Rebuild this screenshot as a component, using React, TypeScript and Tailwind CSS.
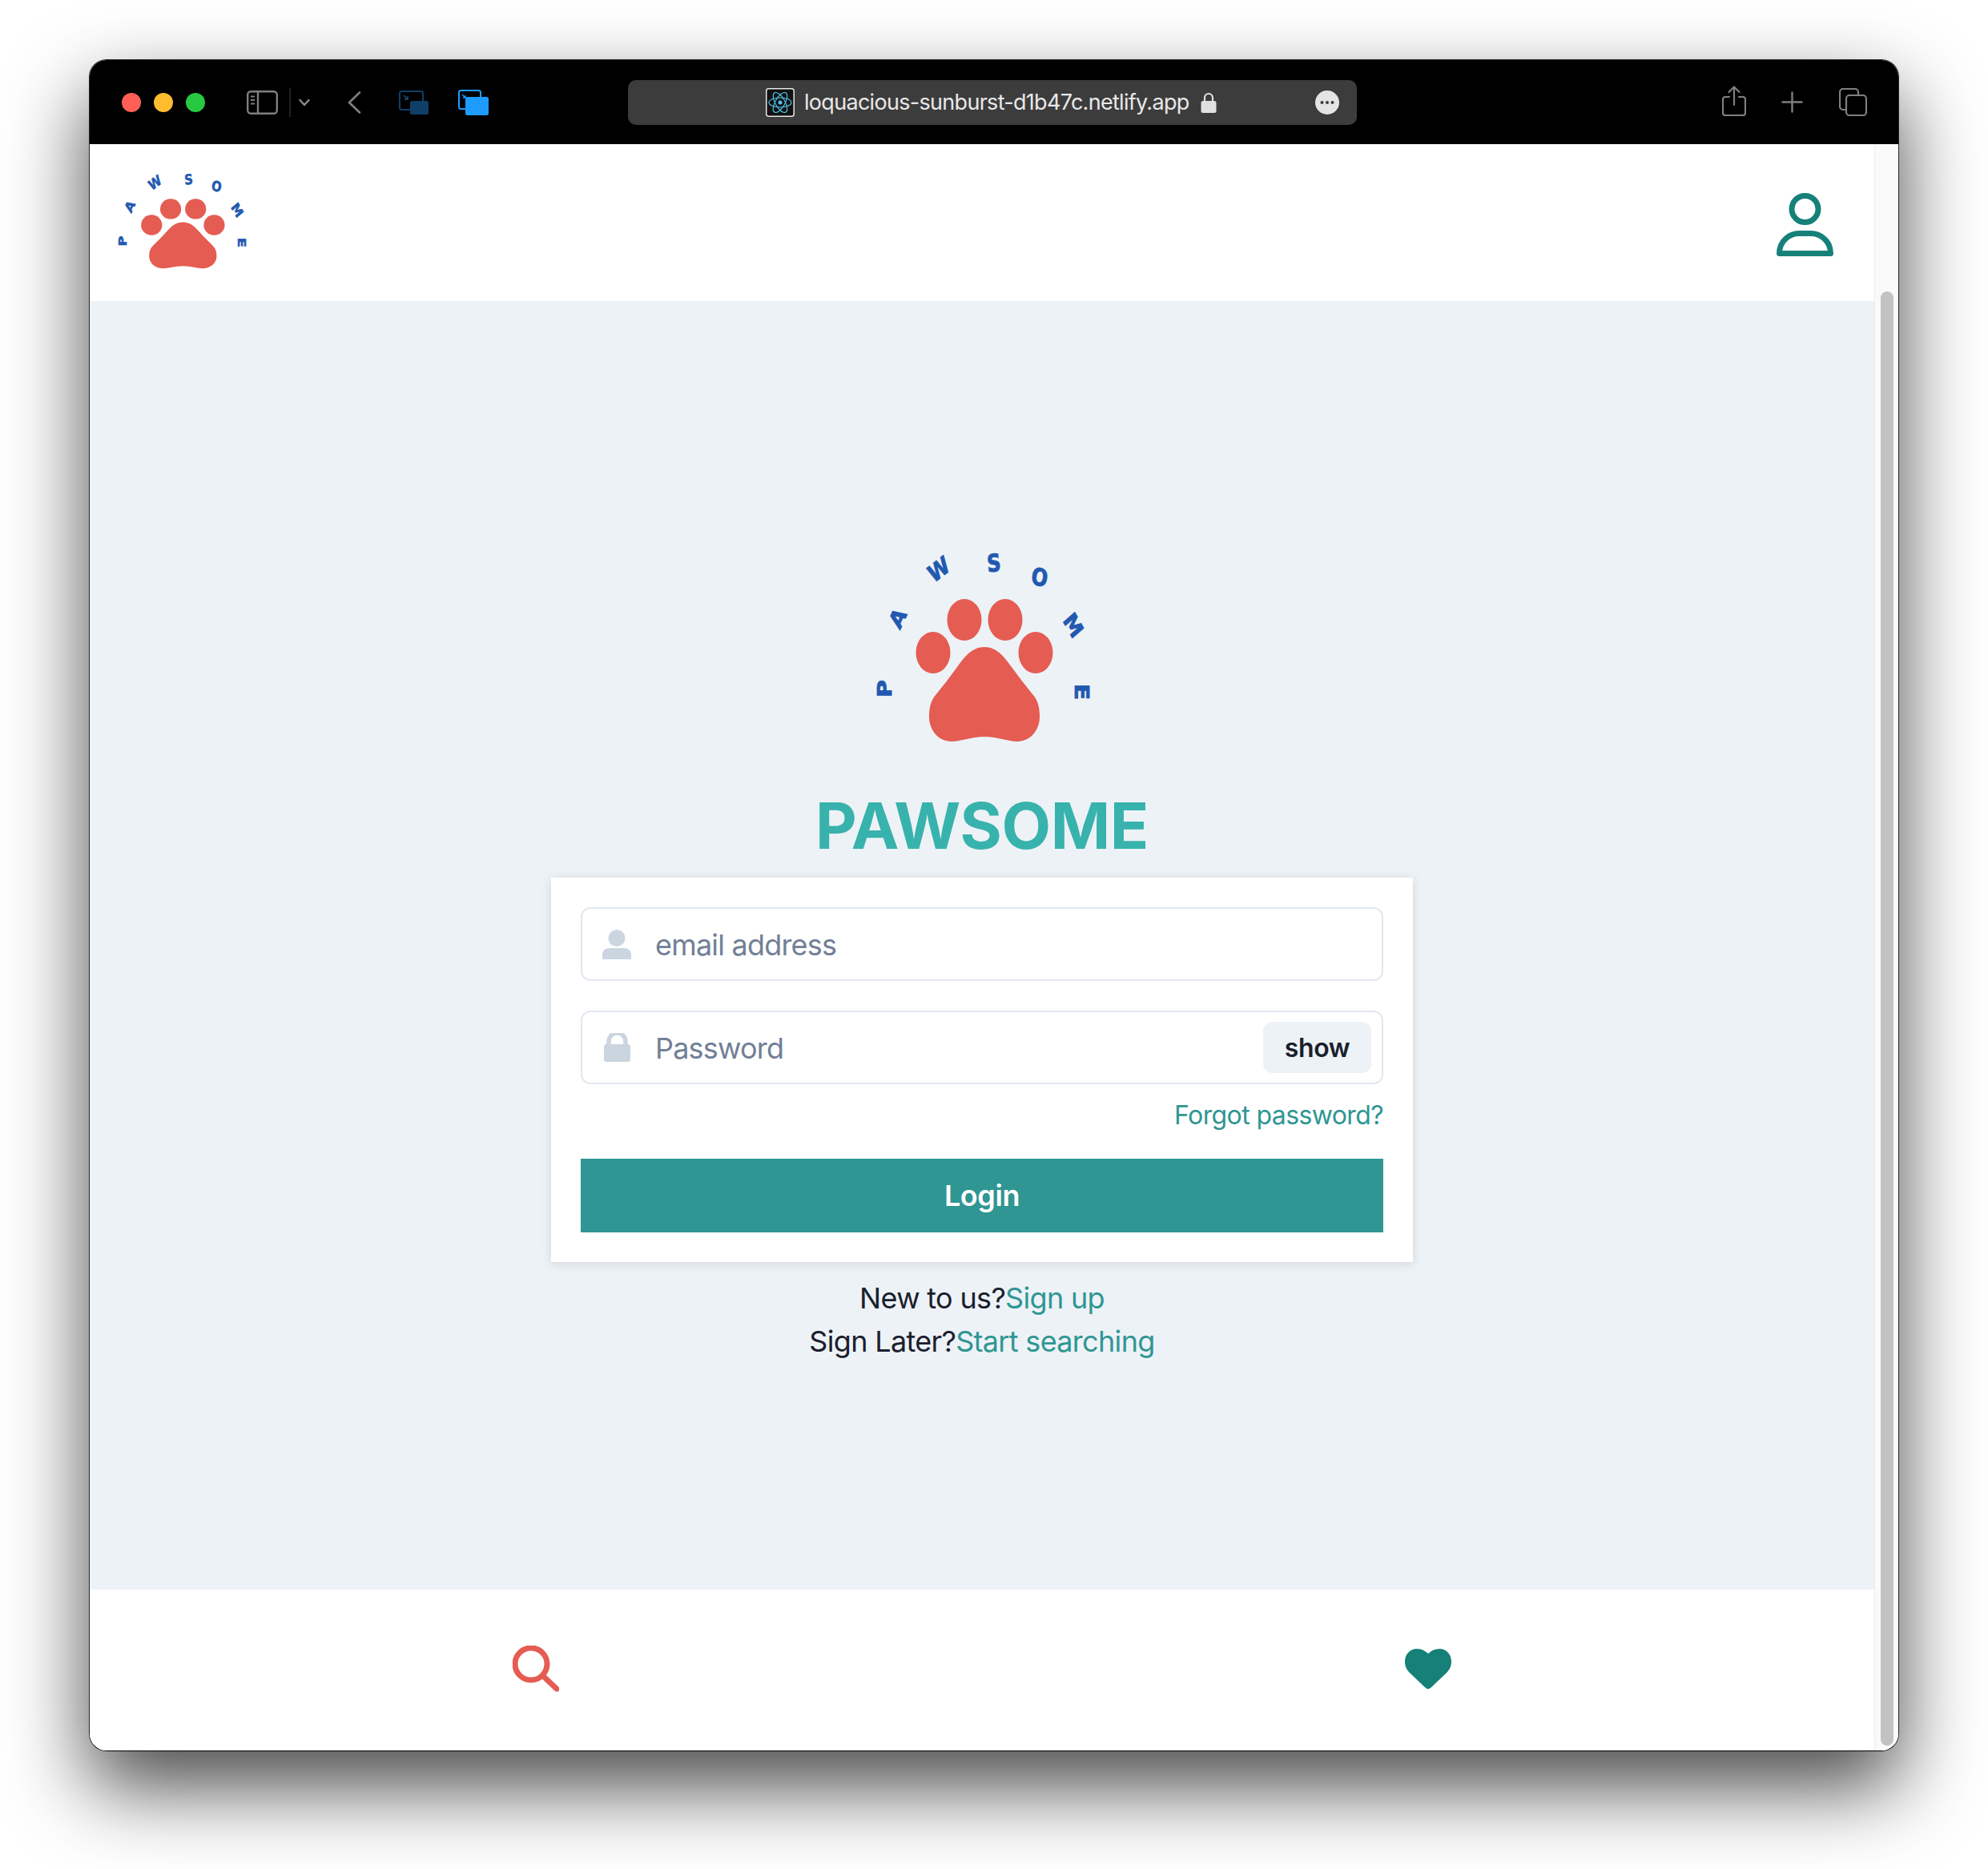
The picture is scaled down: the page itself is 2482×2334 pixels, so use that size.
import React from "react";

function PawLogo({ className, small }: { className: string; small?: boolean }) {
  const letters: [string, number, number, number][] = [
    ["P", 19, 180, -90],
    ["A", 35, 92, -60],
    ["W", 86, 31, -32],
    ["S", 155, 23, -5],
    ["O", 212, 41, 12],
    ["M", 254, 101, 55],
    ["E", 264, 184, 90],
  ];
  const shift = small ? -4 : 0;
  const yScale = small ? 1.5 : 1.25;
  return (
    <svg viewBox="0 0 280 260" preserveAspectRatio="none" className={`overflow-visible ${className}`}>
      <ellipse cx="79" cy="135" rx="21.5" ry="26" fill="#e55c52" />
      <ellipse cx="118" cy="94" rx="21.5" ry="26" fill="#e55c52" />
      <ellipse cx="169" cy="94" rx="21.5" ry="26" fill="#e55c52" />
      <ellipse cx="207" cy="135" rx="21.5" ry="26" fill="#e55c52" />
      <path
        fill="#e55c52"
        d="M143 128C158 128 167 139 177 153C187 167 195 177 204 188C210 195 212 204 212 215C212 232 200 246 184 246C172 246 160 240 143 240C126 240 114 246 102 246C86 246 74 232 74 215C74 204 76 195 82 188C91 177 99 167 109 153C119 139 128 128 143 128Z"
      />
      {letters.map(([c, x, y, r]) => (
        <text
          key={c}
          textAnchor="middle"
          dominantBaseline="central"
          fontFamily="'DejaVu Sans', sans-serif"
          fontWeight="700"
          fontSize="24"
          fill="#2259b0"
          stroke="#2259b0"
          strokeWidth="0.8"
          transform={`translate(${x} ${y + shift}) scale(1 ${yScale}) rotate(${r})`}
        >
          {c}
        </text>
      ))}
    </svg>
  );
}

function TitleBar() {
  return (
    <div className="flex h-[105px] shrink-0 items-center bg-black">
      <div className="ml-[40px] flex gap-4">
        <div className="h-6 w-6 rounded-full bg-[#ff5f57]" />
        <div className="h-6 w-6 rounded-full bg-[#febc2e]" />
        <div className="h-6 w-6 rounded-full bg-[#28c840]" />
      </div>
      <svg viewBox="0 0 39 30" className="ml-[52px] h-[30px] w-[39px]" fill="none" stroke="#7f7f7f" strokeWidth="2.4">
        <rect x="1.2" y="1.2" width="36.6" height="27.6" rx="4" />
        <path d="M14 1.2V28.8" />
        <path d="M5 7.5H10M5 12H10M5 16.5H10" strokeWidth="1.8" />
      </svg>
      <div className="ml-[14px] h-9 w-0.5 bg-[#222222]" />
      <svg viewBox="0 0 14 10" className="ml-[10px] h-[10px] w-[14px]" fill="none" stroke="#8c8c8c" strokeWidth="2.4" strokeLinecap="round" strokeLinejoin="round">
        <path d="M1.5 2L7 8L12.5 2" />
      </svg>
      <svg viewBox="0 0 17 28" className="ml-[47px] h-7 w-[17px]" fill="none" stroke="#7f7f7f" strokeWidth="2.6" strokeLinecap="round" strokeLinejoin="round">
        <path d="M15 1.5L2 14L15 26.5" />
      </svg>
      <svg viewBox="0 0 37 30" className="ml-[47px] h-[30px] w-[37px]">
        <rect x="1" y="1" width="29" height="23" rx="2.5" fill="none" stroke="#0f3f66" strokeWidth="2" />
        <rect x="14" y="13" width="23" height="17" rx="2.5" fill="#0f3f66" />
        <path d="M6 6L11 11M11 7V11H7" fill="none" stroke="#0f4f80" strokeWidth="1.5" />
      </svg>
      <svg viewBox="0 0 38 32" className="ml-[37px] h-8 w-[38px]">
        <rect x="1" y="1" width="27" height="23" rx="2.5" fill="none" stroke="#1e9bff" strokeWidth="2" />
        <rect x="9" y="9" width="29" height="23" rx="2.5" fill="#1e9bff" />
        <path d="M5 6L9 10M9 7V10H6" fill="none" stroke="#1e9bff" strokeWidth="1.3" />
      </svg>
      <div className="ml-[174px] flex h-14 w-[910px] items-center rounded-[10px] bg-[#3c3c3c] pl-[172px] pr-[22px]">
        <svg viewBox="0 0 36 36" className="h-9 w-9 shrink-0">
          <rect x="0.75" y="0.75" width="34.5" height="34.5" rx="3" fill="#111" stroke="#e8e8e8" strokeWidth="1.5" />
          <g fill="none" stroke="#4fc3e8" strokeWidth="1.2">
            <ellipse cx="18" cy="18" rx="14" ry="6" />
            <ellipse cx="18" cy="18" rx="14" ry="6" transform="rotate(60 18 18)" />
            <ellipse cx="18" cy="18" rx="14" ry="6" transform="rotate(120 18 18)" />
          </g>
          <circle cx="18" cy="18" r="2.5" fill="#4fc3e8" />
        </svg>
        <span className="ml-[12px] whitespace-nowrap font-['Inter',sans-serif] text-[27px] leading-9 tracking-[-0.7px] text-[#e8e8e8]">
          loquacious-sunburst-d1b47c.netlify.app
        </span>
        <svg viewBox="0 0 20 26" className="ml-[14px] h-[26px] w-5 shrink-0">
          <path d="M5 12V7a5 5 0 0 1 10 0v5" fill="none" stroke="#e0e0e0" strokeWidth="2.2" />
          <rect x="0.5" y="11" width="19" height="15" rx="2.5" fill="#e0e0e0" />
        </svg>
        <svg viewBox="0 0 30 30" className="ml-auto h-[30px] w-[30px] shrink-0">
          <circle cx="15" cy="15" r="15" fill="#e4e4e4" />
          <circle cx="8.5" cy="15" r="2" fill="#3c3c3c" />
          <circle cx="15" cy="15" r="2" fill="#3c3c3c" />
          <circle cx="21.5" cy="15" r="2" fill="#3c3c3c" />
        </svg>
      </div>
      <svg viewBox="0 0 30 38" className="mb-[4px] ml-[456px] h-[38px] w-[30px]" fill="none" stroke="#7f7f7f" strokeWidth="2.2" strokeLinecap="round" strokeLinejoin="round">
        <path d="M9 14H4a3 3 0 0 0-3 3V34a3 3 0 0 0 3 3H26a3 3 0 0 0 3-3V17a3 3 0 0 0-3-3H21" />
        <path d="M15 24V2M8.5 8L15 1.5L21.5 8" />
      </svg>
      <svg viewBox="0 0 27 27" className="ml-[44px] h-[27px] w-[27px]" fill="none" stroke="#7f7f7f" strokeWidth="2.4" strokeLinecap="round">
        <path d="M13.5 1.5V25.5M1.5 13.5H25.5" />
      </svg>
      <svg viewBox="0 0 35 35" className="ml-[45px] h-[35px] w-[35px]" fill="none" stroke="#7f7f7f" strokeWidth="2.2">
        <path d="M8 27H5a4 4 0 0 1-4-4V5a4 4 0 0 1 4-4H20a4 4 0 0 1 4 4V8" />
        <rect x="9" y="9" width="25" height="25" rx="4" />
      </svg>
    </div>
  );
}

export default function App() {
  return (
    <div className="h-[2334px] w-[2482px] overflow-hidden bg-white pl-[111px] pt-[74px] font-['Inter',sans-serif]">
      <div className="flex h-[2113px] w-[2260px] flex-col overflow-hidden rounded-[22px] border border-[#262626] border-b-black bg-white shadow-[0_44px_100px_rgba(0,0,0,0.72)]">
        <TitleBar />
        <div className="flex min-h-0 flex-1">
          <div className="flex min-w-0 flex-1 flex-col">
            <header className="flex h-[196px] shrink-0 items-center justify-between bg-white pl-[29px] pr-[51px]">
              <PawLogo small className="h-[127px] w-[171px]" />
              <svg viewBox="0 0 71 79" className="mt-[5px] h-[79px] w-[71px]" fill="none" stroke="#168179" strokeWidth="7" strokeLinejoin="round">
                <circle cx="35.5" cy="20" r="16.5" />
                <path d="M3.5 75.5C3.5 60 16 50.5 28 50.5H43C55 50.5 67.5 60 67.5 75.5Z" />
              </svg>
            </header>
            <main className="flex flex-1 flex-col items-center bg-[#edf2f7] pt-[304px] text-[#1a202c]">
              <PawLogo className="h-[260px] w-[280px]" />
              <h1 className="mt-[43px] text-[80px] font-bold leading-[96px] tracking-[-0.4px] text-[#38b2ac]">PAWSOME</h1>
              <div className="mt-[17px] flex h-[480px] w-[1076px] flex-col bg-white px-[37px] pt-[37px] shadow-[0_2px_12px_rgba(0,0,0,0.12)]">
                <div className="flex h-[92px] items-center rounded-xl border-2 border-[#e2e8f0] pl-[25px]">
                  <svg viewBox="0 0 36 37" className="h-[37px] w-9 shrink-0" fill="#cbd5e0">
                    <ellipse cx="18" cy="10.5" rx="10.5" ry="10.5" />
                    <path d="M0 37V31C0 26 4 23 9 23H27C32 23 36 26 36 31V37Z" />
                  </svg>
                  <span className="ml-[30px] pt-[2px] text-[36px] tracking-[-0.8px] text-[#718096]">email address</span>
                </div>
                <div className="mt-[37px] flex h-[92px] items-center rounded-xl border-2 border-[#e2e8f0] pl-[27px] pr-[13px]">
                  <svg viewBox="0 0 33 36" className="h-9 w-[33px] shrink-0" fill="#cbd5e0">
                    <path d="M6 15V10.5a10.5 10.5 0 0 1 21 0V15" fill="none" stroke="#cbd5e0" strokeWidth="5.5" />
                    <rect x="0" y="14" width="33" height="22" rx="3" />
                  </svg>
                  <span className="ml-[31px] pt-[2px] text-[36px] tracking-[-0.8px] text-[#718096]">Password</span>
                  <div className="ml-auto flex h-16 w-[135px] items-center justify-center rounded-xl bg-[#edf2f7] pt-[2px] text-[32px] font-semibold tracking-[-0.4px]">
                    show
                  </div>
                </div>
                <div className="mt-[15px] text-right text-[32px] leading-[48px] tracking-[-0.6px] text-[#2f9693]">Forgot password?</div>
                <div className="mt-[30px] flex h-[92px] items-center justify-center bg-[#2f9693] text-[36px] font-semibold tracking-[-0.4px] text-white">
                  Login
                </div>
              </div>
              <div className="mt-[18px] text-center text-[36px] leading-[54px] tracking-[-0.68px]">
                <div>
                  New to us?<span className="text-[#2f9693]">Sign up</span>
                </div>
                <div>
                  Sign Later?<span className="text-[#2f9693]">Start searching</span>
                </div>
              </div>
            </main>
            <footer className="grid h-[201px] shrink-0 grid-cols-2 items-center justify-items-center bg-white">
              <svg viewBox="0 0 58 58" className="mb-[3px] h-[58px] w-[58px]" fill="none" stroke="#e55c52" strokeWidth="7" strokeLinecap="round">
                <circle cx="23" cy="23" r="20" />
                <path d="M38 38L55 54" />
              </svg>
              <svg viewBox="0 0 58 51" className="mb-[2px] h-[51px] w-[58px]" fill="#168179">
                <path d="M29 6C33 2 38 0 43 0C52 0 58 7 58 16C58 23 55 27 51 31L32 49C30 50.5 28 50.5 26 49L7 31C3 27 0 23 0 16C0 7 6 0 15 0C20 0 25 2 29 6Z" />
              </svg>
            </footer>
          </div>
          <div className="flex w-[30px] shrink-0 border-l border-[#ececec] bg-[#fafafa] pb-[6px] pl-[7px] pt-[184px]">
            <div className="w-4 rounded-full bg-[#c2c2c2]" />
          </div>
        </div>
      </div>
    </div>
  );
}
